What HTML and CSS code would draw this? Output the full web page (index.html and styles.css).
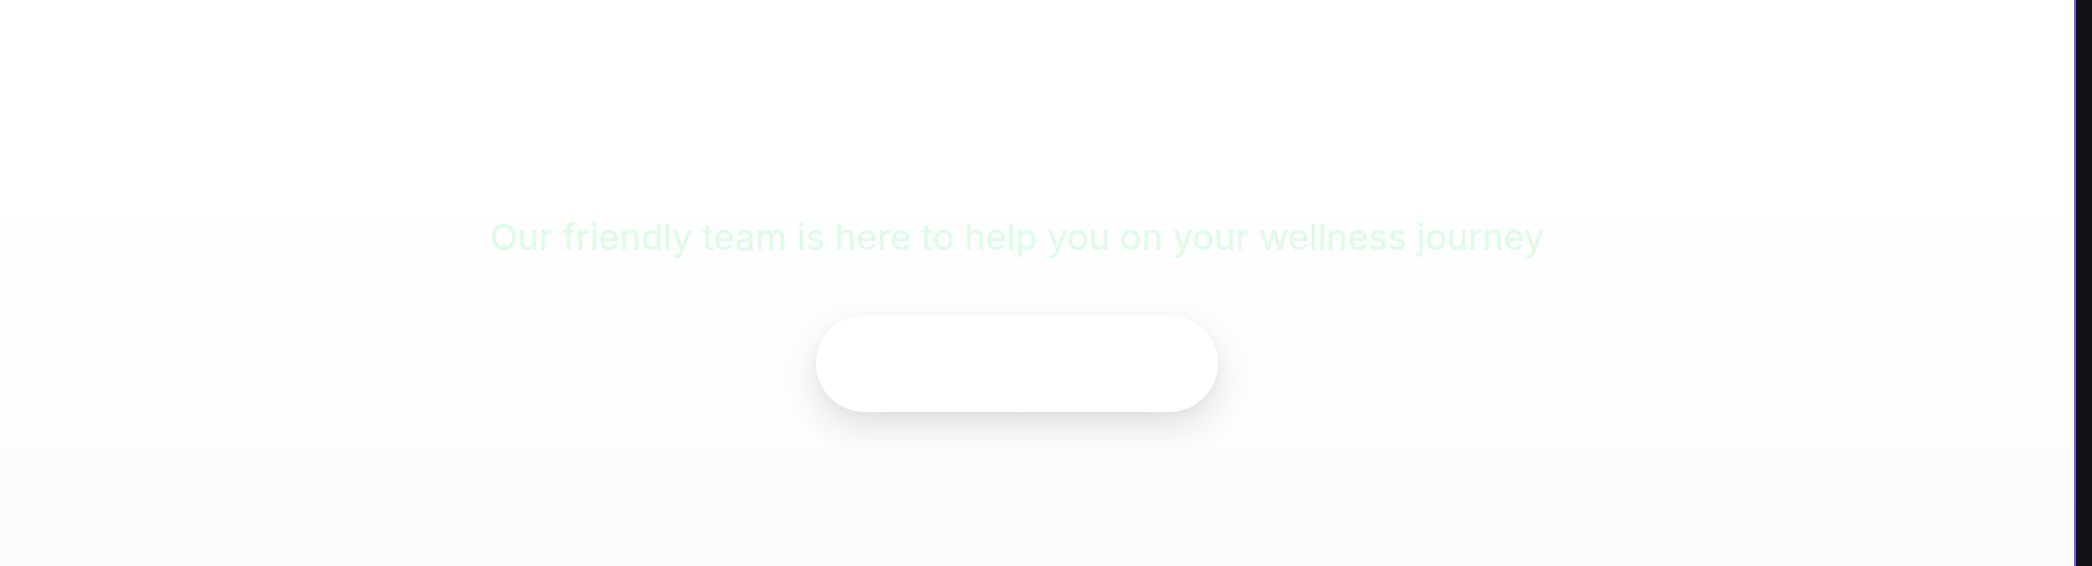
FILE: index.html
```html
<!DOCTYPE html>
<html lang="en">
<head>
<meta charset="utf-8">
<title>Wellness</title>
<link rel="stylesheet" href="styles.css">
</head>
<body>
<div class="frame">
  <main class="main">
    <section class="hero">
      <p class="tagline">Our friendly team is here to help you on your wellness journey</p>
      <a class="cta" href="#">Get in touch</a>
    </section>
  </main>
  <div class="edge"></div>
</div>
</body>
</html>
```

FILE: styles.css
```css
* { box-sizing: border-box; }
html, body { margin: 0; padding: 0; height: 100%; }
body {
  font-family: Inter, "Noto Sans", sans-serif;
  background: #ffffff;
  overflow: hidden;
}
.frame {
  display: flex;
  height: 566px;
}
.main {
  flex: 1;
  background: linear-gradient(180deg, #ffffff 0%, #ffffff 25%, #fbfbfb 100%);
  padding-right: 40px;
}
.hero {
  display: flex;
  flex-direction: column;
  align-items: center;
  padding-top: 210px;
}
.tagline {
  margin: 0;
  font-size: 36px;
  line-height: 54px;
  font-weight: 400;
  color: #dcfce7;
}
.cta {
  margin-top: 51px;
  width: 402px;
  height: 97px;
  border-radius: 50px;
  background: #ffffff;
  color: #ffffff;
  text-decoration: none;
  display: flex;
  align-items: center;
  justify-content: center;
  font-size: 20px;
  font-weight: 600;
  box-shadow: 0 14px 34px rgba(0, 0, 0, 0.11), 0 2px 8px rgba(0, 0, 0, 0.03);
}
.edge {
  width: 18px;
  background: #111218;
  border-left: 2px solid #7c5ce8;
}
```
